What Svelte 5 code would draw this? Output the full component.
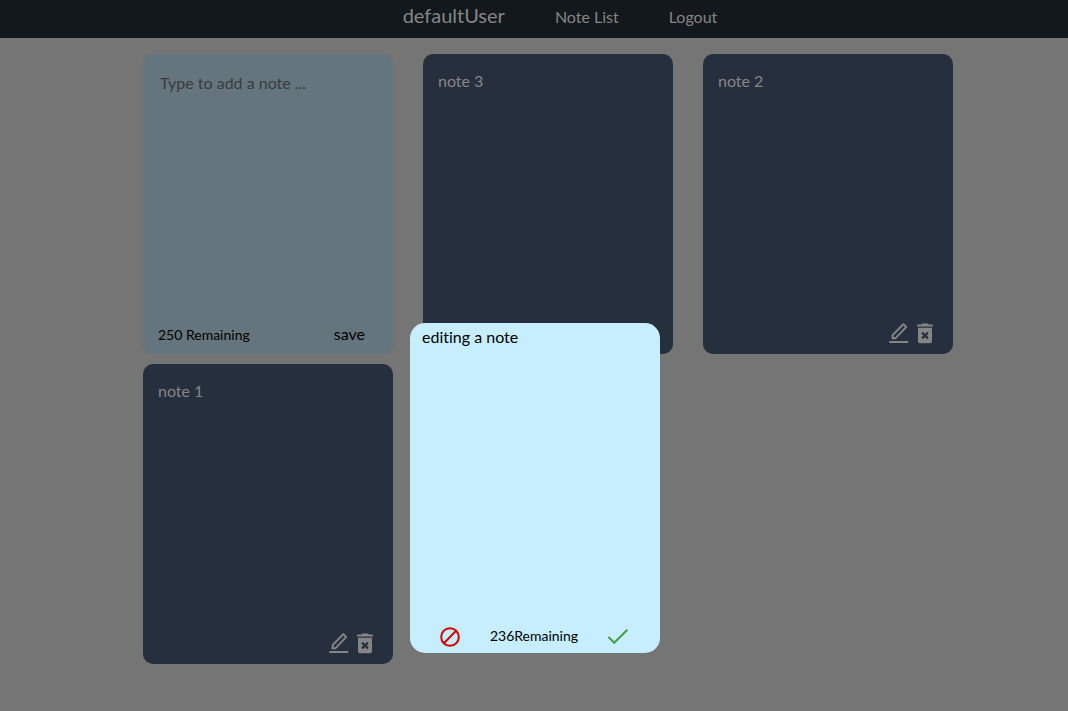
<script>
  let draft = $state('');
  let edited = $state('editing a note');
  const notes = [
    { id: 3, text: 'note 3' },
    { id: 2, text: 'note 2' },
    { id: 1, text: 'note 1' }
  ];
</script>

<div class="page">
  <header>
    <nav>
      <a class="brand" href="#home">defaultUser</a>
      <a href="#notes">Note List</a>
      <a href="#logout">Logout</a>
    </nav>
  </header>

  <main>
    <section class="card compose">
      <textarea aria-label="New note" placeholder="Type to add a note ..." maxlength="250" bind:value={draft}></textarea>
      <div class="foot">
        <span>{250 - draft.length} Remaining</span>
        <button class="save">save</button>
      </div>
    </section>

    {#each notes as note (note.id)}
      <article class="card note">
        <p>{note.text}</p>
        <div class="actions">
          <button aria-label="Edit {note.text}">
            <svg width="24" height="24" viewBox="0 0 24 24" fill="currentColor">
              <path fill-rule="evenodd" d="M4.6 18.2v-4.4L15.6 2.6q.8-.7 1.6 0l2.6 2.6q.8.8 0 1.6L8.8 18.2zM6.6 14.6v1.7h1.6l9.7-10.2-1.5-1.6z" />
              <rect x="2" y="20" width="19.5" height="2" rx="1" />
            </svg>
          </button>
          <button aria-label="Delete {note.text}">
            <svg width="24" height="24" viewBox="0 0 24 24" fill="currentColor">
              <path d="M4 4.4q0-1 .9-1h3.3l1-1h5.6l1 1h3.3q.9 0 .9 1v1.2H4z" />
              <path fill-rule="evenodd" d="M5 6.8h14v13.4q0 2-2 2H7q-2 0-2-2zM12 12.9 9.9 10.8 8.3 12.4 10.4 14.5 8.3 16.6 9.9 18.2 12 16.1 14.1 18.2 15.7 16.6 13.6 14.5 15.7 12.4 14.1 10.8z" />
            </svg>
          </button>
        </div>
      </article>
    {/each}
  </main>

  <div class="overlay">
    <div class="editor" role="dialog" aria-label="Edit note">
      <textarea aria-label="Note text" bind:value={edited}></textarea>
      <div class="controls">
        <button class="cancel" aria-label="Cancel">
          <svg width="24" height="24" viewBox="0 0 24 24" fill="none" stroke="currentColor" stroke-width="2">
            <circle cx="12" cy="13" r="8.8" />
            <path d="M5.8 19.2 18.2 6.8" />
          </svg>
        </button>
        <span>{250 - edited.length}Remaining</span>
        <button class="confirm" aria-label="Save changes">
          <svg width="24" height="24" viewBox="0 0 24 24" fill="none" stroke="currentColor" stroke-width="2">
            <path d="M2.5 13 8.2 18.8 21.4 5.8" />
          </svg>
        </button>
      </div>
    </div>
  </div>
</div>

<style>
  :global(body) {
    margin: 0;
    background: #757575;
  }
  .page {
    position: relative;
    min-height: 100vh;
    font: 16px/24px Lato, sans-serif;
    font-variant-ligatures: none;
    color: #000;
  }
  header {
    background: #12181b;
  }
  nav {
    display: flex;
    justify-content: center;
    align-items: baseline;
    gap: 50px;
    height: 38px;
    padding: 0 0 0 52px;
    box-sizing: border-box;
  }
  a {
    color: #858585;
    text-decoration: none;
    line-height: 30px;
  }
  .brand {
    font-size: 20px;
  }
  main {
    display: grid;
    grid-template-columns: repeat(auto-fit, 250px);
    justify-content: center;
    gap: 10px 30px;
    max-width: 810px;
    margin: 0 auto;
    padding: 16px 0 0 28px;
  }
  .card {
    display: flex;
    flex-direction: column;
    height: 300px;
    border-radius: 10px;
    box-sizing: border-box;
  }
  .compose {
    background: #64757e;
    padding: 15px;
  }
  textarea {
    flex: 1;
    border: 0;
    outline: 0;
    resize: none;
    background: none;
    font: inherit;
    font-variant-ligatures: none;
    color: inherit;
    box-sizing: border-box;
  }
  .compose textarea {
    padding: 2px;
  }
  .compose textarea::placeholder {
    color: #3b3b3b;
  }
  .foot {
    display: flex;
    justify-content: space-between;
    align-items: center;
    height: 8px;
    padding-right: 13px;
    font-size: 14px;
  }
  button {
    display: flex;
    border: 0;
    padding: 0;
    background: none;
    color: inherit;
    font: inherit;
    cursor: pointer;
  }
  .save {
    font-size: 16px;
    padding-bottom: 2px;
  }
  .note {
    justify-content: space-between;
    background: #262f3e;
    color: #858585;
    padding: 15px 16px 9px 15px;
  }
  p {
    margin: 0;
  }
  .actions {
    display: flex;
    justify-content: flex-end;
    gap: 2px;
  }
  .overlay {
    position: absolute;
    top: 323px;
    left: 0;
    right: 0;
    display: flex;
    justify-content: center;
    padding-left: 2px;
    pointer-events: none;
  }
  .editor {
    display: flex;
    flex-direction: column;
    width: 250px;
    height: 330px;
    border-radius: 15px;
    overflow: hidden;
    background: #c6eeff;
    pointer-events: auto;
  }
  .editor textarea {
    padding: 2px 12px;
  }
  .controls {
    display: flex;
    justify-content: space-between;
    align-items: center;
    padding: 0 30px 5px 28px;
    font-size: 14px;
  }
  .cancel {
    color: #d50000;
  }
  .confirm {
    color: #43a047;
  }
</style>
